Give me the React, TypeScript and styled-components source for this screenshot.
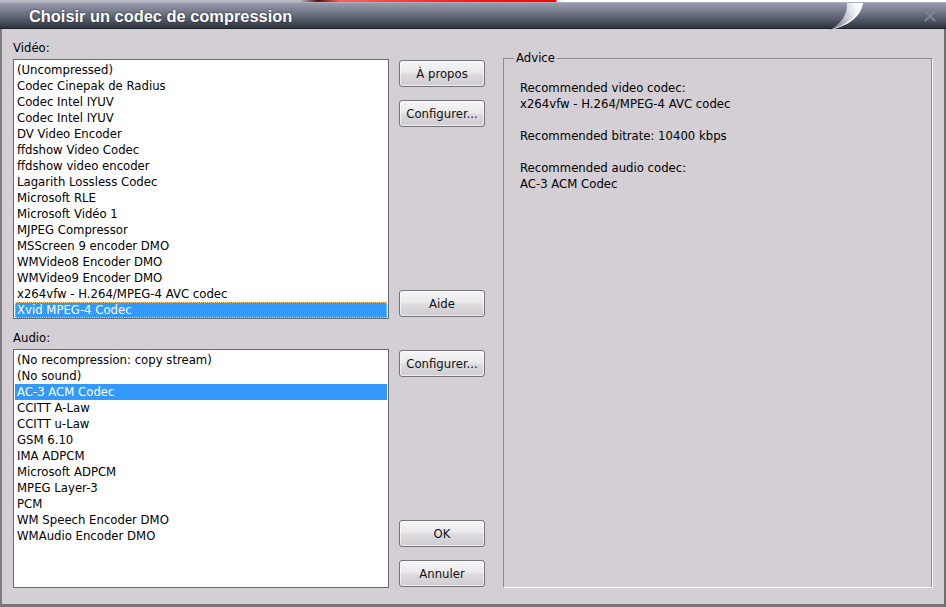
import React from "react";
import styled, { createGlobalStyle } from "styled-components";

const GlobalStyle = createGlobalStyle`
  html, body { margin: 0; padding: 0; background: #d3cfd4; }
  * { box-sizing: border-box; }
`;

const Window = styled.div`
  width: 946px;
  height: 607px;
  display: flex;
  flex-direction: column;
  background: #d3cfd4;
  font-family: "DejaVu Sans", Verdana, sans-serif;
  font-size: 11.7px;
  color: #000;
  overflow: hidden;
`;

const TopStrip = styled.div`
  height: 2px;
  flex: none;
  background: linear-gradient(
    to right,
    #b9b9c2 0px,
    #b9b9c2 300px,
    #5a1010 318px,
    #ff6060 340px,
    #ff1010 480px,
    #ff0000 556px,
    #e8e8e8 557px,
    #ffffff 565px,
    #ffffff 945px
  );
`;

const TitleBar = styled.div`
  position: relative;
  height: 27px;
  flex: none;
  display: flex;
  align-items: center;
  padding: 1px 0 0 29px;
  background: linear-gradient(to bottom, #979bad 0%, #7a7f90 30%, #4f5563 70%, #2d323c 100%);
  border-top: 1px solid #a9adbc;
  border-bottom: 1px solid #1f232b;
`;

const Title = styled.h1`
  margin: 0;
  font-family: "Liberation Sans", Arial, sans-serif;
  font-weight: bold;
  font-size: 16.4px;
  color: #ffffff;
  text-shadow: 0 0 2px #20242c;
`;

const Swoosh = styled.svg`
  position: absolute;
  left: 826px;
  top: -3px;
`;

const CloseIcon = styled.svg`
  position: absolute;
  right: 10px;
  top: 7px;
`;

const Frame = styled.div`
  flex: 1;
  display: flex;
  border-left: 2px solid #7c7b80;
  border-right: 2px solid #6e6d72;
  border-bottom: 3px solid #76757a;
`;

const Body = styled.div`
  flex: 1;
  display: grid;
  grid-template-columns: 376px 86px 438px;
  grid-template-rows: 279px 269px;
  column-gap: 10px;
  padding: 11px 0 0 11px;
`;

const ListColumn = styled.div<{ $labelHeight: number }>`
  display: grid;
  grid-template-rows: ${(p) => p.$labelHeight}px 1fr;
`;

const Label = styled.div`
  display: flex;
  align-items: flex-end;
  padding-bottom: 4px;
  line-height: 13px;
`;

const ListBox = styled.ul`
  margin: 0;
  padding: 2px 1px 1px 1px;
  list-style: none;
  background: #ffffff;
  border: 1px solid #6b6a70;
  overflow: hidden;
`;

const Item = styled.li<{ $selected?: boolean; $focus?: boolean }>`
  height: 16px;
  line-height: 16px;
  padding-left: 2px;
  white-space: nowrap;
  background: ${(p) => (p.$selected ? "#3399ff" : "transparent")};
  color: ${(p) => (p.$selected ? "#ffffff" : "#000000")};
  outline: ${(p) => (p.$focus ? "1px dotted #ffd07a" : "none")};
  outline-offset: -1px;
`;

const ButtonColumn = styled.div<{ $top: number; $bottom: number }>`
  display: flex;
  flex-direction: column;
  gap: 13px;
  padding-top: ${(p) => p.$top}px;
  padding-bottom: ${(p) => p.$bottom}px;
`;

const Button = styled.button<{ $push?: boolean }>`
  height: 27px;
  flex: none;
  margin-top: ${(p) => (p.$push ? "auto" : "0")};
  border: 1px solid #76747a;
  border-radius: 3px;
  background: linear-gradient(to bottom, #f6f5f7 0%, #ebe9ec 45%, #dcdadd 55%, #cfcdd1 100%);
  box-shadow: inset 0 0 0 1px rgba(255, 255, 255, 0.6);
  font-family: "DejaVu Sans", Verdana, sans-serif;
  font-size: 11.7px;
  color: #111;
  padding: 0;
`;

const Advice = styled.div`
  grid-row: 1 / span 2;
  grid-column: 3;
  position: relative;
  margin: 18px 0 0 8px;
  border-top: 1px solid #8d8c91;
  border-left: 1px solid #8d8c91;
  border-right: 1px solid #ffffff;
  border-bottom: 1px solid #ffffff;
  box-shadow: inset -1px 0 0 #8d8c91;
  padding: 21px 16px 0 16px;
  line-height: 16px;
`;

const Legend = styled.span`
  position: absolute;
  left: 10px;
  top: -9px;
  padding: 0 2px;
  background: #d3cfd4;
  line-height: 16px;
`;

const AdviceBlock = styled.p`
  margin: 0 0 16px 0;
`;

const videoCodecs = [
  "(Uncompressed)",
  "Codec Cinepak de Radius",
  "Codec Intel IYUV",
  "Codec Intel IYUV",
  "DV Video Encoder",
  "ffdshow Video Codec",
  "ffdshow video encoder",
  "Lagarith Lossless Codec",
  "Microsoft RLE",
  "Microsoft Vidéo 1",
  "MJPEG Compressor",
  "MSScreen 9 encoder DMO",
  "WMVideo8 Encoder DMO",
  "WMVideo9 Encoder DMO",
  "x264vfw - H.264/MPEG-4 AVC codec",
  "Xvid MPEG-4 Codec",
];

const audioCodecs = [
  "(No recompression: copy stream)",
  "(No sound)",
  "AC-3 ACM Codec",
  "CCITT A-Law",
  "CCITT u-Law",
  "GSM 6.10",
  "IMA ADPCM",
  "Microsoft ADPCM",
  "MPEG Layer-3",
  "PCM",
  "WM Speech Encoder DMO",
  "WMAudio Encoder DMO",
];

export default function App() {
  return (
    <>
      <GlobalStyle />
      <Window>
        <TopStrip />
        <TitleBar>
          <Title>Choisir un codec de compression</Title>
          <Swoosh width="40" height="31" viewBox="0 0 40 31">
            <defs>
              <linearGradient id="sw" x1="0" y1="0.6" x2="1" y2="0.2">
                <stop offset="0" stopColor="#6f7383" />
                <stop offset="0.45" stopColor="#c9cbd3" />
                <stop offset="0.8" stopColor="#f4f4f7" />
                <stop offset="1" stopColor="#ffffff" />
              </linearGradient>
            </defs>
            <path d="M21 3 L37 3 C35 15 25 25 4 30 C16 23 22 13 21 3 Z" fill="url(#sw)" />
            <path d="M35 3 L37 3 C35 15 25 25 4 30 C24 24 33 14 35 3 Z" fill="#ffffff" />
          </Swoosh>
          <CloseIcon width="12" height="12" viewBox="0 0 12 12">
            <path d="M1 1 L11 11 M11 1 L1 11" stroke="#80848f" strokeWidth="2" />
          </CloseIcon>
        </TitleBar>
        <Frame>
          <Body>
            <ListColumn $labelHeight={19}>
              <Label>Vidéo:</Label>
              <ListBox>
                {videoCodecs.map((c, i) => (
                  <Item key={i} $selected={i === 15} $focus={i === 15}>
                    {c}
                  </Item>
                ))}
              </ListBox>
            </ListColumn>
            <ButtonColumn $top={20} $bottom={2}>
              <Button>À propos</Button>
              <Button>Configurer...</Button>
              <Button $push>Aide</Button>
            </ButtonColumn>
            <Advice>
              <Legend>Advice</Legend>
              <AdviceBlock>
                Recommended video codec:
                <br />
                x264vfw - H.264/MPEG-4 AVC codec
              </AdviceBlock>
              <AdviceBlock>Recommended bitrate: 10400 kbps</AdviceBlock>
              <AdviceBlock>
                Recommended audio codec:
                <br />
                AC-3 ACM Codec
              </AdviceBlock>
            </Advice>
            <ListColumn $labelHeight={30}>
              <Label>Audio:</Label>
              <ListBox>
                {audioCodecs.map((c, i) => (
                  <Item key={i} $selected={i === 2}>
                    {c}
                  </Item>
                ))}
              </ListBox>
            </ListColumn>
            <ButtonColumn $top={31} $bottom={1}>
              <Button>Configurer...</Button>
              <Button $push>OK</Button>
              <Button>Annuler</Button>
            </ButtonColumn>
          </Body>
        </Frame>
      </Window>
    </>
  );
}
